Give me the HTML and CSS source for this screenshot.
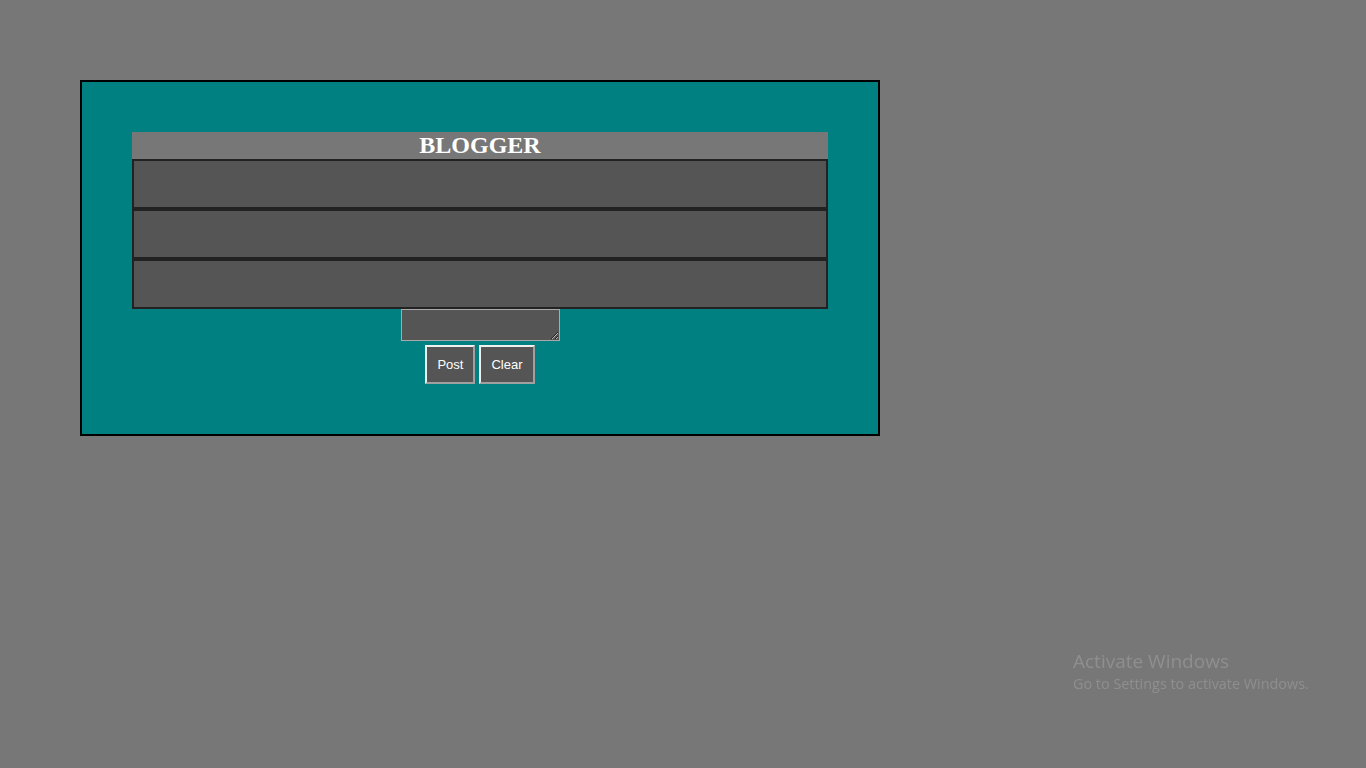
FILE: index.html
```html
<!DOCTYPE html>
<html>
<head>
<meta charset="utf-8">
<title>Blogger</title>
<link rel="stylesheet" href="styles.css">
</head>
<body>
<div class="frame">
  <div class="blog">
    <h2 class="title">BLOGGER</h2>
    <div class="post"></div>
    <div class="post"></div>
    <div class="post"></div>
    <textarea class="entry"></textarea>
    <div class="actions">
      <button class="btn">Post</button>
      <button class="btn">Clear</button>
    </div>
  </div>
</div>
<div class="watermark">
  <div class="wm-title">Activate Windows</div>
  <div class="wm-sub">Go to Settings to activate Windows.</div>
</div>
</body>
</html>
```
FILE: styles.css
```css
html, body {
  margin: 0;
  padding: 0;
  background: #777777;
  height: 100%;
}
body {
  padding: 80px;
  box-sizing: border-box;
}
.frame {
  width: 800px;
  box-sizing: border-box;
  border: 2px solid #000;
  background: #008080;
  padding: 50px;
}
.blog {
  display: flex;
  flex-direction: column;
  align-items: center;
}
.title {
  margin: 0;
  width: 100%;
  height: 27px;
  background: #777777;
  color: #fff;
  font-family: "Liberation Serif", "Times New Roman", serif;
  font-weight: bold;
  font-size: 24px;
  line-height: 27px;
  text-align: center;
}
.post {
  width: 100%;
  height: 50px;
  box-sizing: border-box;
  border: 2px solid #222;
  background: #555555;
}
.entry {
  width: 159px;
  height: 32px;
  box-sizing: border-box;
  margin: 0;
  border: 1px solid #a9a9a9;
  background: #555555;
  color: #fff;
  padding: 2px;
  display: block;
}
.actions {
  display: flex;
  gap: 4px;
  margin-top: 4px;
}
.btn {
  background: #555555;
  color: #fff;
  font-family: "Liberation Sans", Arial, sans-serif;
  font-size: 13px;
  line-height: 15px;
  padding: 10px;
  margin: 0;
  border: 2px solid;
  border-color: #f0f0f0 #a0a0a0 #a0a0a0 #f0f0f0;
}
.watermark {
  position: fixed;
  left: 1073px;
  top: 648px;
  font-family: "Open Sans", "Noto Sans", sans-serif;
  color: #8f8f8f;
}
.wm-title {
  font-size: 19px;
  line-height: 26px;
}
.wm-sub {
  font-size: 14.4px;
  line-height: 20px;
}
```
